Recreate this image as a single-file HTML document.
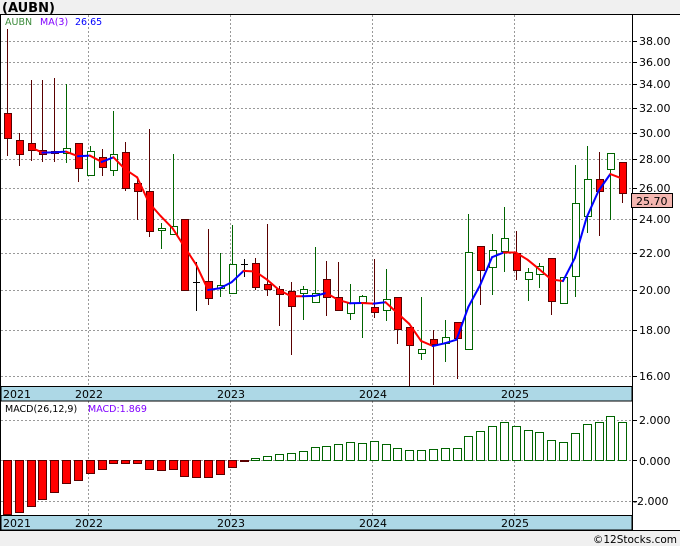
<!DOCTYPE html>
<html><head><meta charset="utf-8"><style>
html,body{margin:0;padding:0;background:#f0f0f0;width:680px;height:546px;overflow:hidden}
svg{display:block;font-family:"DejaVu Sans","Liberation Sans",sans-serif}
</style></head><body>
<svg id="s" width="680" height="546" xmlns="http://www.w3.org/2000/svg">
<rect x="0" y="0" width="680" height="546" fill="#f0f0f0"/>
<rect x="0" y="14" width="680" height="517" fill="#fff"/>
<text x="2" y="12" font-size="13" font-weight="bold" fill="#000">(AUBN)</text>
<line x1="0" y1="14.5" x2="680" y2="14.5" stroke="#000"/>
<line x1="0.5" y1="14" x2="0.5" y2="531" stroke="#000"/>
<g id="grid"></g>
<g id="cand"></g>
<g id="ma"></g>
<g id="macd"></g>
<line x1="632.5" y1="14" x2="632.5" y2="531" stroke="#000"/>
<rect x="1" y="386.5" width="631" height="14.5" fill="#add8e6" stroke="#000" stroke-width="1"/>
<rect x="1" y="515.5" width="631" height="14.5" fill="#add8e6" stroke="#000" stroke-width="1"/>
<line x1="0" y1="530.5" x2="680" y2="530.5" stroke="#000"/>
<g font-size="11" fill="#000">
<text x="3" y="398">2021</text><text x="75" y="398">2022</text><text x="217" y="398">2023</text><text x="359" y="398">2024</text><text x="501" y="398">2025</text>
<text x="3" y="527">2021</text><text x="75" y="527">2022</text><text x="217" y="527">2023</text><text x="359" y="527">2024</text><text x="501" y="527">2025</text>
</g>
<g font-size="11" fill="#000">
<text x="639" y="45">38.00</text><text x="639" y="66">36.00</text><text x="639" y="88">34.00</text><text x="639" y="112">32.00</text><text x="639" y="137">30.00</text><text x="639" y="163">28.00</text><text x="639" y="192">26.00</text><text x="639" y="223">24.00</text><text x="639" y="257">22.00</text><text x="639" y="294">20.00</text><text x="639" y="334">18.00</text><text x="639" y="380">16.00</text>
<text x="639" y="424">2.000</text><text x="639" y="465">0.000</text><text x="633" y="505">-2.000</text>
</g>
<rect x="631.5" y="193.5" width="41" height="14" fill="#f4b6b0" stroke="#000"/>
<text x="636" y="205" font-size="11" fill="#000">25.70</text>
<text x="5" y="25" font-size="9.5" fill="#3a8a3a">AUBN</text>
<text x="40" y="25" font-size="9.5" fill="#8000ff">MA(3)</text>
<text x="75" y="25" font-size="9.5" fill="#0000ff">26.65</text>
<text x="5" y="412" font-size="9.5" fill="#000">MACD(26,12,9)</text>
<text x="88" y="412" font-size="9.5" fill="#8000ff">MACD:1.869</text>
<text x="677" y="543" font-size="10.5" fill="#000" text-anchor="end">©12Stocks.com</text>
</svg>
<script>
var NS="http://www.w3.org/2000/svg";
function el(p,t,a){var e=document.createElementNS(NS,t);for(var k in a)e.setAttribute(k,a[k]);document.getElementById(p).appendChild(e);return e;}
var yp=function(p){return 376-387*Math.log(p/16);};
[16,18,20,22,24,26,28,30,32,34,36,38].forEach(function(p){var y=Math.round(yp(p))+0.5;el("grid","line",{x1:1,y1:y,x2:632,y2:y,stroke:"#999","stroke-dasharray":"2,2"});el("grid","line",{x1:632,y1:y,x2:637,y2:y,stroke:"#000"});});
[420,460,501].forEach(function(y){el("grid","line",{x1:1,y1:y+0.5,x2:632,y2:y+0.5,stroke:"#999","stroke-dasharray":"2,2"});el("grid","line",{x1:632,y1:y+0.5,x2:637,y2:y+0.5,stroke:"#000"});});
[88,230,372,514].forEach(function(x){el("grid","line",{x1:x+0.5,y1:15,x2:x+0.5,y2:386,stroke:"#999","stroke-dasharray":"2,2"});el("grid","line",{x1:x+0.5,y1:401,x2:x+0.5,y2:515,stroke:"#999","stroke-dasharray":"2,2"});});
// [hi,lo,top,bot,color]
var C=[[29,156,113,138,'r'],[133,166,140,154,'r'],[80,161,143,150,'r'],[80,162,150,154,'r'],[78,162,151,153,'r'],[84,163,148,153,'g'],[143,182,143,168,'r'],[146,176,151,175,'g'],[149,176,157,167,'r'],[111,176,154,170,'g'],
[142,191,152,188,'r'],[179,220,183,191,'r'],[129,237,191,231,'r'],[223,249,228,230,'g'],[154,234,226,234,'g'],[219,290,219,290,'r'],[262,311,282,282,'k'],[229,305,281,298,'r'],[253,297,285,288,'g'],[225,293,264,293,'g'],
[259,277,264,264,'k'],[258,290,263,287,'r'],[224,296,284,289,'r'],[286,326,289,294,'r'],[282,355,291,306,'r'],[286,320,289,293,'g'],[247,302,293,302,'g'],[261,316,279,297,'r'],[262,310,297,310,'r'],[284,320,303,313,'g'],
[295,338,296,302,'g'],[259,318,307,312,'r'],[269,321,299,310,'g'],[297,344,297,329,'r'],[327,387,327,345,'r'],[297,360,349,353,'g'],[330,385,339,344,'r'],[320,362,337,343,'g'],[322,379,322,338,'r'],[214,349,252,349,'g'],
[246,305,246,270,'r'],[234,295,250,267,'g'],[207,272,238,251,'g'],[231,280,253,270,'r'],[268,301,272,279,'g'],[263,288,266,274,'g'],[258,315,258,301,'r'],[277,303,277,303,'g'],[165,297,203,276,'g'],[146,233,179,216,'g'],
[152,236,179,191,'r'],[153,220,153,169,'g'],[162,203,162,193,'r']];
var cl=[];
C.forEach(function(c,i){var x=Math.round(7+11.83*i);var col=c[4]=='r'?'#5a0000':(c[4]=='g'?'#006400':'#000');
el("cand","line",{x1:x+0.5,y1:c[0],x2:x+0.5,y2:c[1],stroke:col});
if(c[4]=='k'){el("cand","line",{x1:x-3,y1:c[2]+0.5,x2:x+4,y2:c[2]+0.5,stroke:'#000'});cl.push(c[2]);}
else{var h=Math.max(c[3]-c[2],2);el("cand","rect",{x:x-3+0.5,y:c[2]+0.5,width:7,height:h,fill:c[4]=='r'?'#ff0000':'#fff',stroke:col});cl.push(c[4]=='r'?c[3]:c[2]);}
});
var pr=function(y){return 16*Math.exp((376-y)/387);};
var ma=[];for(var i=2;i<cl.length;i++){ma.push([7+11.83*i,yp((pr(cl[i])+pr(cl[i-1])+pr(cl[i-2]))/3)]);}
for(var j=1;j<ma.length;j++){el("ma","line",{x1:ma[j-1][0],y1:ma[j-1][1],x2:ma[j][0],y2:ma[j][1],stroke:ma[j][1]<ma[j-1][1]?'#0000ff':'#ff0000','stroke-width':2,'stroke-linecap':'round'});}
var R=[514,512,506,499,492,483,480,473,469,463,463,463,469,470,469,476,477,477,474,467,461];
var G=[458,456,454,453,451,447,446,444,442,443,441,444,448,450,450,449,448,448,436,431,426,422,426,430,432,440,442,433,424,422,416,422];
R.forEach(function(b,i){var x=Math.round(7+11.83*i);el("macd","rect",{x:x-4+0.5,y:460.5,width:8,height:Math.max(b-460,1),fill:'#ff0000',stroke:'#5a0000'});});
G.forEach(function(t,k){var i=k+21;var x=Math.round(7+11.83*i);el("macd","rect",{x:x-4+0.5,y:t+0.5,width:8,height:460-t,fill:'#fff',stroke:'#006400'});});
</script>
</body></html>
